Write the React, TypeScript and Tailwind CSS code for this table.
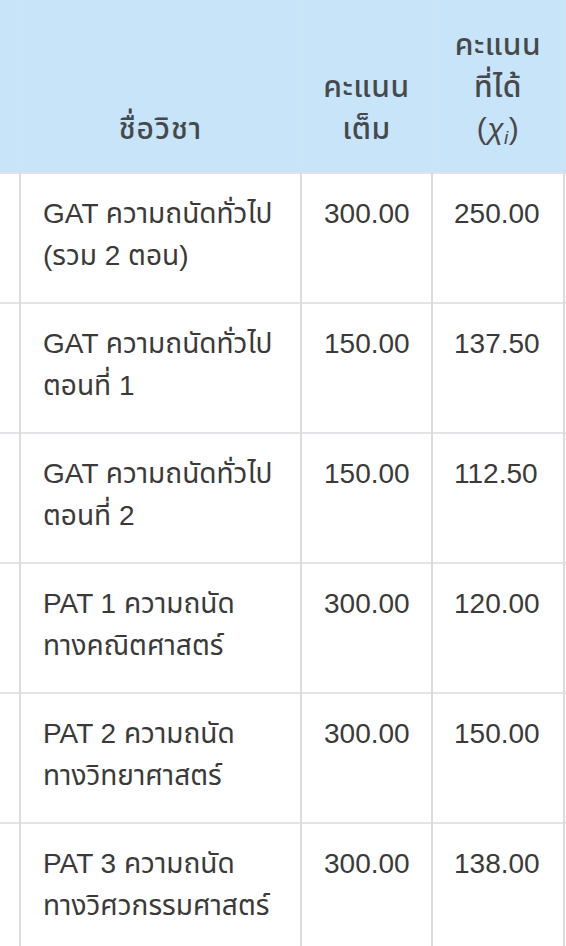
import React from "react";

const rows = [
  { name: ["GAT ความถนัดทั่วไป", "(รวม 2 ตอน)"], full: "300.00", got: "250.00" },
  { name: ["GAT ความถนัดทั่วไป", "ตอนที่ 1"], full: "150.00", got: "137.50" },
  { name: ["GAT ความถนัดทั่วไป", "ตอนที่ 2"], full: "150.00", got: "112.50" },
  { name: ["PAT 1 ความถนัด", "ทางคณิตศาสตร์"], full: "300.00", got: "120.00" },
  { name: ["PAT 2 ความถนัด", "ทางวิทยาศาสตร์"], full: "300.00", got: "150.00" },
  { name: ["PAT 3 ความถนัด", "ทางวิศวกรรมศาสตร์"], full: "300.00", got: "138.00" },
];

export default function App() {
  return (
    <div
      className="w-[566px] h-[946px] overflow-hidden bg-white"
      style={{ fontFamily: '"Liberation Sans", "Noto Sans Thai", "Noto Sans", sans-serif' }}
    >
      <table className="table-fixed border-collapse w-[566px] text-[28px] text-[#3a3a3a]">
        <colgroup>
          <col className="w-[20px]" />
          <col className="w-[281px]" />
          <col className="w-[131px]" />
          <col className="w-[132px]" />
          <col className="w-[2px]" />
        </colgroup>
        <thead>
          <tr className="bg-[#c7e4f8] h-[173px] border-b-2 border-[#e2e2ec]">
            <th className="border-r border-[#d3e3ee] p-0"></th>
            <th className="border-r border-[#d3e3ee] align-bottom pb-[22px] font-medium text-[30px] tracking-[1px] leading-[42px] text-[#46494c] text-center">
              ชื่อวิชา
            </th>
            <th className="border-r border-[#d3e3ee] align-bottom pb-[22px] font-medium text-[30px] tracking-[0.5px] leading-[42px] text-[#46494c] text-center">
              คะแนน
              <br />
              เต็ม
            </th>
            <th className="border-r border-[#d3e3ee] align-bottom pb-[22px] font-medium text-[30px] tracking-[0.5px] leading-[42px] text-[#46494c] text-center">
              คะแนน
              <br />
              ที่ได้
              <br />
              (<i className="font-medium">χ<sub className="text-[19px]">i</sub></i>)
            </th>
            <th className="p-0"></th>
          </tr>
        </thead>
        <tbody>
          {rows.map((r, i) => (
            <tr key={i} className="h-[130px] border-b-2 border-[#e3e3e8]">
              <td className="border-r-2 border-[#dcdcdc] p-0"></td>
              <td className="border-r-2 border-[#dcdcdc] align-top pl-[22px] pr-2 pt-[19px] leading-[42px] whitespace-nowrap">
                {r.name[0]}
                <br />
                {r.name[1]}
              </td>
              <td className="border-r-2 border-[#dcdcdc] align-top pl-[22px] pt-[19px] leading-[42px]">
                {r.full}
              </td>
              <td className="border-r-2 border-[#dcdcdc] align-top pl-[21px] pt-[19px] leading-[42px]">
                {r.got}
              </td>
              <td className="p-0"></td>
            </tr>
          ))}
        </tbody>
      </table>
    </div>
  );
}
